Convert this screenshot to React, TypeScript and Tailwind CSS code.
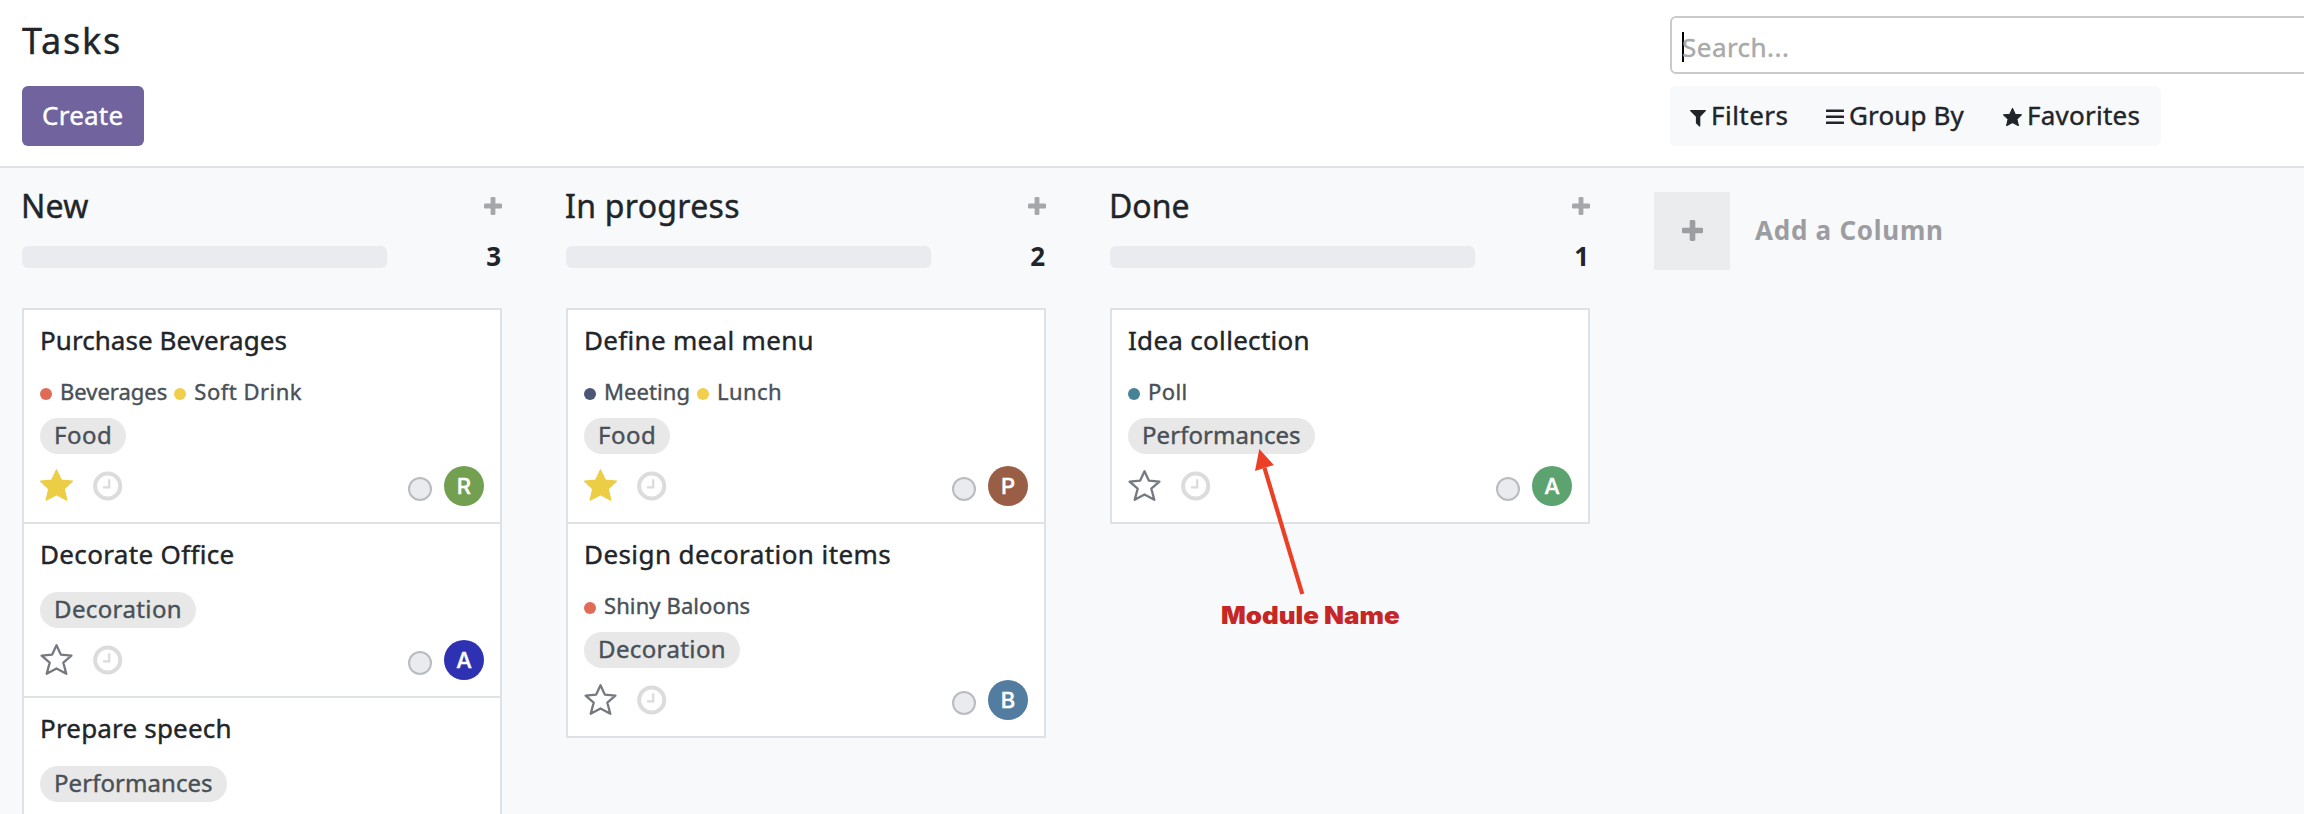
import type { ReactNode } from "react";

type Label = { text: string; track: string };
type Tag = Label & { color: string };
type Task = {
  title: Label;
  tags?: Tag[];
  module: Label;
  starred?: boolean;
  initial?: string;
  avatar: string;
};
type Stage = { name: Label; tasks: Task[] };

const food: Label = { text: "Food", track: "tracking-[0.5px]" };
const decoration: Label = { text: "Decoration", track: "tracking-[0.38px]" };
const performances: Label = { text: "Performances", track: "tracking-[0.06px]" };

const stages: Stage[] = [
  {
    name: { text: "New", track: "tracking-[0.3px]" },
    tasks: [
      {
        title: { text: "Purchase Beverages", track: "tracking-[0.06px]" },
        tags: [
          { text: "Beverages", track: "tracking-[0px]", color: "bg-[#e06c58]" },
          { text: "Soft Drink", track: "tracking-[0.5px]", color: "bg-[#f0cf4c]" },
        ],
        module: food,
        starred: true,
        initial: "R",
        avatar: "bg-[#739f50]",
      },
      {
        title: { text: "Decorate Office", track: "tracking-[0.34px]" },
        module: decoration,
        initial: "A",
        avatar: "bg-[#2e32b2]",
      },
      {
        title: { text: "Prepare speech", track: "tracking-[0.18px]" },
        module: performances,
        avatar: "bg-[#739f50]",
      },
    ],
  },
  {
    name: { text: "In progress", track: "tracking-[0.3px]" },
    tasks: [
      {
        title: { text: "Define meal menu", track: "tracking-[0.31px]" },
        tags: [
          { text: "Meeting", track: "tracking-[0.08px]", color: "bg-[#4b5675]" },
          { text: "Lunch", track: "tracking-[0.4px]", color: "bg-[#f0cf4c]" },
        ],
        module: food,
        starred: true,
        initial: "P",
        avatar: "bg-[#9a5e46]",
      },
      {
        title: { text: "Design decoration items", track: "tracking-[0.42px]" },
        tags: [{ text: "Shiny Baloons", track: "tracking-[0.1px]", color: "bg-[#e06c58]" }],
        module: decoration,
        initial: "B",
        avatar: "bg-[#527da0]",
      },
    ],
  },
  {
    name: { text: "Done", track: "tracking-[0px]" },
    tasks: [
      {
        title: { text: "Idea collection", track: "tracking-[0.3px]" },
        tags: [{ text: "Poll", track: "tracking-[0.4px]", color: "bg-[#488297]" }],
        module: performances,
        initial: "A",
        avatar: "bg-[#5ca36f]",
      },
    ],
  },
];

const STAR = "M16.5 .8 21.3 11 32.4 12.2 24.3 19.9 26.9 31.3 16.5 25.8 6.1 31.3 8.7 19.9 .6 12.2 11.7 11Z";

function Star({ filled }: { filled?: boolean }) {
  return filled ? (
    <svg viewBox="0 0 33 32" className="h-8 w-[33px]">
      <path d={STAR} fill="#eccd45" stroke="#eccd45" strokeWidth="1.2" strokeLinejoin="round" />
    </svg>
  ) : (
    <svg viewBox="0 0 33 32" className="h-8 w-[33px]">
      <path
        d="M16.5 2.2 20.8 11.6 31.4 12.7 23.3 19.6 26.3 30.8 16.5 25.4 6.700 30.8 9.7 19.6 1.6 12.7 12.2 11.6Z"
        fill="none"
        stroke="#767a80"
        strokeWidth="2.3"
        strokeLinejoin="round"
      />
    </svg>
  );
}

function Clock() {
  return (
    <svg viewBox="0 0 30 30" className="h-[30px] w-[30px]">
      <circle cx="14.7" cy="15" r="12.6" fill="none" stroke="#dcdcdc" strokeWidth="4" />
      <path d="M16.2 8.3v8h-6.2" fill="none" stroke="#dcdcdc" strokeWidth="2.3" />
    </svg>
  );
}

function Plus({ className }: { className: string }) {
  return (
    <svg viewBox="0 0 18 18" className={className} fill="currentColor">
      <rect x="6.6" y="0" width="4.8" height="18" rx="1.2" />
      <rect x="0" y="6.6" width="18" height="4.8" rx="1.2" />
    </svg>
  );
}

function TaskCard({ task }: { task: Task }) {
  return (
    <article className="border-2 border-[#dee2e6] bg-white px-4 pt-3 pb-4 not-first:-mt-0.5">
      <h3 className={`text-[26px] leading-9 ${task.title.track}`}>{task.title.text}</h3>
      <div className="mt-5">
        {task.tags && (
          <div className="flex h-10 items-start gap-[7px]">
            {task.tags.map((t) => (
              <span key={t.text} className="flex items-center gap-2">
                <span className={`mt-1 size-3 rounded-full ${t.color}`} />
                <span className={`pb-0.5 text-[22px] leading-[26px] text-[#495057] ${t.track}`}>{t.text}</span>
              </span>
            ))}
          </div>
        )}
        <div className="flex">
          <span
            className={`h-9 rounded-full bg-[#e8e8e8] px-[14px] text-2xl leading-[34px] text-[#495057] ${task.module.track}`}
          >
            {task.module.text}
          </span>
        </div>
      </div>
      <div className="mt-3 flex h-10">
        <div className="pt-[3px]">
          <Star filled={task.starred} />
        </div>
        <div className="ml-5 pt-[5px]">
          <Clock />
        </div>
        <span className="mt-[11px] ml-auto size-6 rounded-full border-2 border-[#b9bcbf] bg-[#e9ebef]" />
        <span
          className={`ml-3 size-10 rounded-full text-center font-['Inter',sans-serif] text-[22px] leading-10 font-medium text-white ${task.avatar}`}
        >
          {task.initial}
        </span>
      </div>
    </article>
  );
}

function StageColumn({ stage }: { stage: Stage }) {
  return (
    <section className="w-[480px] shrink-0 pt-[18px]">
      <header className="flex h-10 items-center justify-between">
        <h2 className={`-ml-px text-[32px] leading-10 ${stage.name.track}`}>{stage.name.text}</h2>
        <Plus className="size-[18px] text-[#a5a8ab]" />
      </header>
      <div className="mt-[13px] flex h-9 items-center justify-between pr-px">
        <div className="h-[22px] w-[365px] rounded-md bg-[#e9ebef]" />
        <span className="pb-0.5 text-[26px] leading-[34px] font-bold [-webkit-text-stroke:0px]">{stage.tasks.length}</span>
      </div>
      <div className="mt-[33px]">
        {stage.tasks.map((t) => (
          <TaskCard key={t.title.text} task={t} />
        ))}
      </div>
    </section>
  );
}

function SearchOption({ icon, className, children }: { icon: ReactNode; className: string; children: ReactNode }) {
  return (
    <button className={`flex items-center pb-0.5 text-[26px] leading-9 whitespace-nowrap ${className}`}>
      {icon}
      {children}
    </button>
  );
}

export default function App() {
  return (
    <div className="flex h-[814px] flex-col overflow-hidden bg-[#f8f9fb] font-['Noto_Sans',sans-serif] text-[#212529] [-webkit-text-stroke:0.4px]">
      <header className="flex h-[168px] shrink-0 border-b-2 border-[#dee2e6] bg-white pl-[22px]">
        <div className="w-[1648px] shrink-0 pt-[21px]">
          <h1 className="text-4xl leading-10 tracking-[1.8px]">Tasks</h1>
          <button className="mt-[25px] flex h-[60px] w-[122px] items-center rounded-md bg-[#71639e] pb-0.5 pl-5 text-[26px] tracking-[0.24px] text-white">
            Create
          </button>
        </div>
        <div className="w-[700px] shrink-0 pt-4">
          <div className="flex h-[58px] items-center rounded-md border-2 border-[#cacaca] pt-1 pl-2.5">
            <span className="-mr-0.5 h-[30px] w-0.5 bg-black" />
            <span className="text-[26px] leading-9 tracking-[0.47px] text-[#a9a9a9]">Search...</span>
          </div>
          <div className="mt-3 flex h-[60px] w-[491px] rounded-md bg-[#f8f9fb] pl-5">
            <SearchOption
              className="w-[136px] tracking-[0.47px]"
              icon={
                <svg viewBox="0 0 16 17" className="mt-1.5 mr-[5px] h-[17px] w-4" fill="currentColor">
                  <path d="M.6 0h14.8c.6 0 .8.7.4 1.1L10.3 6.8V15.900c0 .6-.6.9-1 .5L6.2 13.6a.8.8 0 0 1-.3-.6V6.8L.2 1.1C-.2.7 0 0 .6 0Z" />
                </svg>
              }
            >
              Filters
            </SearchOption>
            <SearchOption
              className="w-[177px] tracking-[0.12px]"
              icon={
                <svg viewBox="0 0 18 16" className="mt-1 mr-[5px] h-4 w-[18px]" fill="currentColor">
                  <rect y="0.5" width="18" height="2.6" rx=".5" />
                  <rect y="6.5" width="18" height="2.6" rx=".5" />
                  <rect y="12.5" width="18" height="2.6" rx=".5" />
                </svg>
              }
            >
              Group By
            </SearchOption>
            <SearchOption
              className="tracking-[0.25px]"
              icon={
                <svg viewBox="0 0 33 32" className="mt-1 mr-[5px] h-[18px] w-[19px]" fill="currentColor">
                  <path d={STAR} stroke="currentColor" strokeWidth="2" strokeLinejoin="round" />
                </svg>
              }
            >
              Favorites
            </SearchOption>
          </div>
        </div>
      </header>

      <main className="relative flex min-h-0 flex-1 gap-16 pl-[22px]">
        {stages.map((s) => (
          <StageColumn key={s.name.text} stage={s} />
        ))}
        <div className="mt-6 flex h-[78px] items-center gap-[25px] text-[#9b9da1]">
          <div className="flex h-[78px] w-[76px] items-center justify-center bg-[#ebecee] pb-0.5">
            <Plus className="size-[21px]" />
          </div>
          <span className="pb-[3px] text-[26px] leading-9 font-bold tracking-[0.74px] whitespace-nowrap [-webkit-text-stroke:0px]">
            Add a Column
          </span>
        </div>

        <div className="absolute top-[280px] left-[1220px] w-[200px]">
          <svg viewBox="0 0 200 152" className="h-[152px] w-[200px]">
            <path d="M44.5 20 82.3 146" stroke="#ec4026" strokeWidth="4.2" />
            <path d="M39.3 1 53.8 17 35 23Z" fill="#ec4026" />
          </svg>
          <span className="ml-px inline-block origin-left scale-x-[1.08] font-['Inter',sans-serif] text-2xl leading-8 font-black whitespace-nowrap text-[#c62626] [-webkit-text-stroke:0px]">
            Module Name
          </span>
        </div>
      </main>
    </div>
  );
}
